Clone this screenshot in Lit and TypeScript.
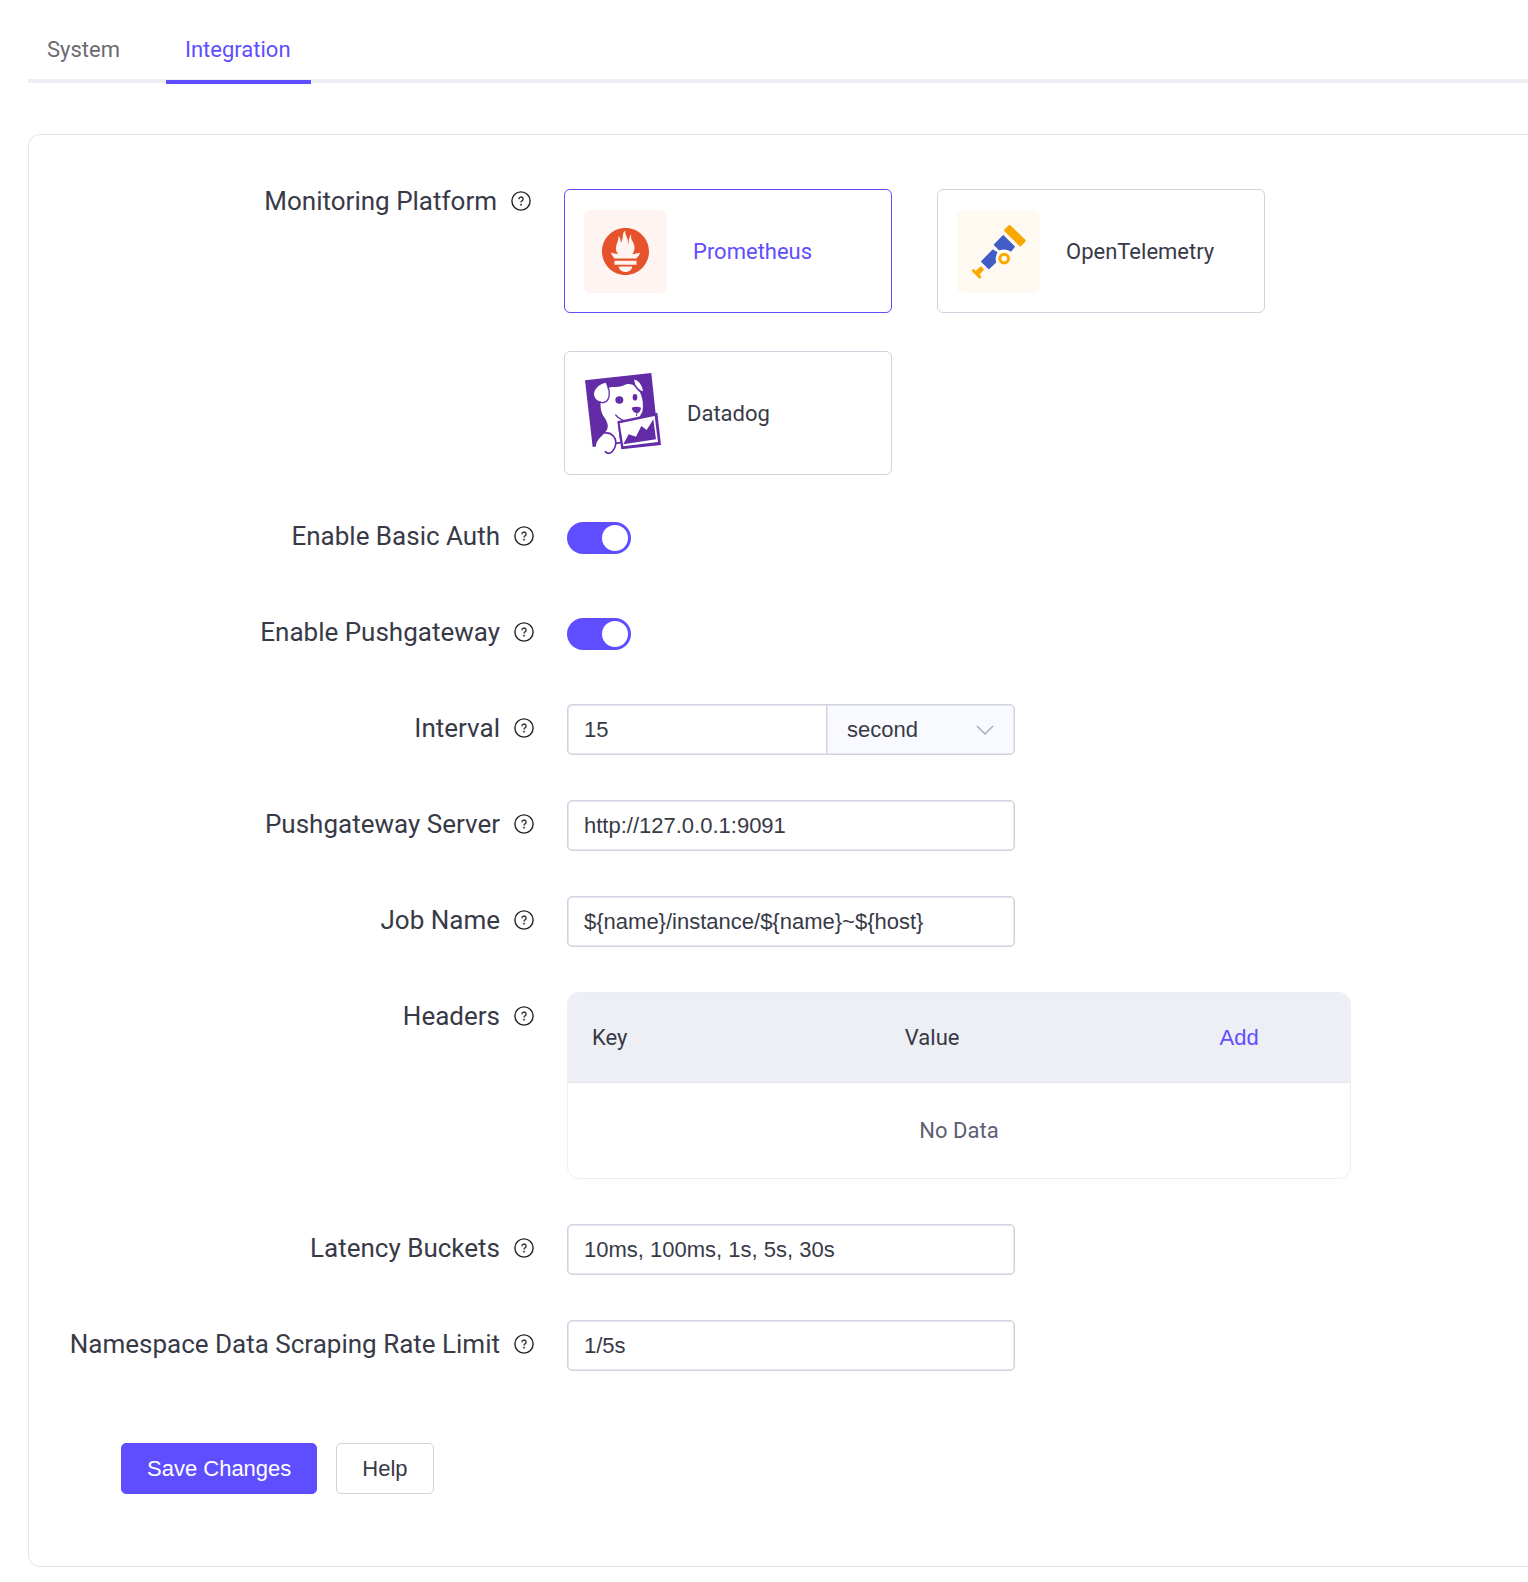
import { LitElement, html, css, TemplateResult } from "lit";
import { customElement, state } from "lit/decorators.js";
import { classMap } from "lit/directives/class-map.js";

const prometheusLogo = html`
  <span class="tile tile-red">
    <svg width="47" height="47" viewBox="0 0 24 24" aria-hidden="true">
      <path
        fill="#e6522c"
        d="M12 0C5.373 0 0 5.372 0 12c0 6.627 5.373 12 12 12s12-5.373 12-12c0-6.628-5.373-12-12-12zm0 22.46c-1.885 0-3.414-1.26-3.414-2.814h6.828c0 1.553-1.528 2.813-3.414 2.813zm5.64-3.745H6.36v-2.046h11.28v2.046zm-.04-3.098H6.391c-.037-.043-.075-.086-.111-.13-1.155-1.401-1.427-2.133-1.69-2.879-.005-.025 1.4.287 2.395.511 0 0 .513.119 1.262.255-.72-.843-1.147-1.915-1.147-3.01 0-2.406 1.845-4.508 1.18-6.207.648.053 1.34 1.367 1.387 3.422.689-.951.977-2.69.977-3.755 0-1.103.727-2.385 1.454-2.429-.648 1.069.168 1.984.893 4.256.272.854.237 2.29.447 3.201.07-1.892.395-4.652 1.595-5.605-.529 1.2.079 2.702.494 3.424.671 1.164 1.078 2.047 1.078 3.716a4.642 4.642 0 01-1.11 2.996c.792-.149 1.34-.283 1.34-.283l2.573-.502s-.374 1.538-1.81 3.019z"
      />
    </svg>
  </span>
`;

const openTelemetryLogo = html`
  <span class="tile tile-amber">
    <svg width="83" height="83" viewBox="0 0 248 248" aria-hidden="true">
      <g fill="#f8a800" stroke="#f8a800" stroke-linejoin="round">
        <path stroke-width="10" d="M157 50 146 61 189 103 200 92Z" />
        <path stroke-width="6" d="M71 172 77 178 66 190 59 183Z" />
        <path fill="none" stroke-width="9" stroke-linecap="round" d="M49 181 68 200" />
        <circle cx="141" cy="145" r="13" fill="none" stroke-width="9" />
      </g>
      <g fill="#425cc7" stroke="#425cc7" stroke-width="4" stroke-linejoin="round">
        <path d="M138 77 171 110 161 122C152 116 138 115 126 118L112 104Z" />
        <path d="M107 120 74 154 95 175 115 156C112 146 114 136 119 127Z" />
      </g>
    </svg>
  </span>
`;

const datadogLogo = html`
  <svg class="dog" width="77" height="83" viewBox="72 48 231 249" aria-hidden="true">
    <path fill="#632ca6" d="M75 73 274 51 294 240 98 273Z" />
    <path
      fill="#fff"
      d="M146 95C160 92 178 95 192 88 202 82 214 83 224 90 236 99 244 112 247 130 250 146 250 166 243 179 238 188 224 194 210 193 200 196 186 200 174 199L178 240 184 282 150 296C130 298 108 288 108 268 110 250 128 240 138 226 148 212 142 200 136 188 126 176 120 160 122 138Z"
    />
    <path fill="#fff" d="M138 80C122 82 104 96 102 112 101 126 114 139 128 136 142 133 146 118 144 104 143 94 141 86 138 80Z" />
    <path fill="none" stroke="#632ca6" stroke-width="4" d="M139 79C148 94 151 118 144 130 139 139 128 142 118 138" />
    <path fill="#fff" d="M222 71C236 72 247 88 249 106 240 104 232 96 226 86Z" />
    <path fill="none" stroke="#632ca6" stroke-width="4" d="M215 74C222 84 226 96 240 106" />
    <ellipse cx="178" cy="132" rx="12" ry="11" fill="#632ca6" />
    <ellipse cx="225" cy="124" rx="7" ry="10" fill="#632ca6" />
    <path fill="#632ca6" d="M215 155C224 151 235 151 243 155 242 165 237 171 231 172 223 170 216 164 215 155Z" />
    <path fill="none" stroke="#632ca6" stroke-width="4" d="M166 176C176 190 196 199 216 196 234 193 243 182 246 172" />
    <path fill="none" stroke="#632ca6" stroke-width="3" d="M231 172 229 180" />
    <path
      fill="none"
      stroke="#632ca6"
      stroke-width="5"
      stroke-linecap="round"
      d="M134 231C156 228 170 246 167 266 164 282 154 292 146 292 142 292 138 289 136 287M167 262 182 260"
    />
    <path fill="#632ca6" d="M172 196 292 170 303 267 184 280Z" />
    <path fill="#fff" d="M179 202 284 180 294 258 190 271Z" />
    <path fill="#632ca6" d="M190 265 206 235 228 242 244 210 260 222 280 190 288 250Z" />
  </svg>
`;

interface Platform {
  id: string;
  name: string;
  logo: TemplateResult;
}

const platforms: Platform[] = [
  { id: "prometheus", name: "Prometheus", logo: prometheusLogo },
  { id: "opentelemetry", name: "OpenTelemetry", logo: openTelemetryLogo },
  { id: "datadog", name: "Datadog", logo: datadogLogo },
];

@customElement("help-icon")
class HelpIcon extends LitElement {
  static styles = css`
    :host {
      display: block;
      flex: none;
      width: 20px;
      height: 20px;
    }
    svg {
      display: block;
    }
  `;

  render() {
    return html`
      <svg width="20" height="20" viewBox="0 0 20 20" fill="none" stroke="#222327" aria-hidden="true">
        <circle cx="10" cy="10" r="9.1" stroke-width="1.4" />
        <path stroke-width="1.3" d="M7.9 8.2A2.1 2 0 1 1 11 9.8C10.3 10.2 10 10.5 10 11.6" />
        <circle cx="10" cy="13.7" r="0.9" fill="#222327" stroke="none" />
      </svg>
    `;
  }
}

@customElement("app-root")
class AppRoot extends LitElement {
  static styles = css`
    :host {
      --brand: #5e4eff;
      --ink: #383a47;
      --line: #d0d3df;
      --soft: #e4e6ee;
      --fill: #eeeff5;
      display: block;
      padding: 18px 0 15px 28px;
      background: #fff;
      color: var(--ink);
      font-family: Roboto, sans-serif;
      font-size: 22px;
      line-height: 32px;
    }
    *,
    *::before {
      box-sizing: border-box;
    }
    .tabs {
      display: flex;
      gap: 26px;
      border-bottom: 4px solid var(--fill);
    }
    .tab {
      margin-bottom: -5px;
      padding: 2px 20px 0 19px;
      border-bottom: 4px solid transparent;
      color: #6b6b6f;
      line-height: 60px;
      text-decoration: none;
    }
    .tab.active {
      border-bottom-color: var(--brand);
      color: var(--brand);
    }
    .panel {
      margin-top: 51px;
      padding: 42px 0 72px;
      border: 1px solid #e6e6ea;
      border-right: none;
      border-radius: 12px 0 0 12px;
    }
    .rows {
      display: grid;
      gap: 45px;
    }
    .row {
      display: grid;
      grid-template-columns: 538px minmax(0, 1fr);
      align-items: start;
    }
    .row.platform {
      grid-template-columns: 535px minmax(0, 1fr);
      margin-bottom: 37px;
    }
    .label {
      display: flex;
      align-items: center;
      justify-content: flex-end;
      gap: 14px;
      padding-right: 33px;
      font-size: 26px;
      line-height: 48px;
      white-space: nowrap;
    }
    .cards {
      display: flex;
      flex-wrap: wrap;
      gap: 38px 45px;
      max-width: 760px;
      padding-top: 12px;
    }
    .card {
      display: flex;
      align-items: center;
      width: 328px;
      padding: 20px 19px 19px;
      border: 1px solid var(--line);
      border-radius: 6px;
      cursor: pointer;
    }
    .card.selected {
      border-color: var(--brand);
      color: var(--brand);
    }
    .card input {
      width: 0;
      height: 0;
      margin: 0;
      appearance: none;
    }
    .card-name {
      margin-left: 26px;
    }
    .tile {
      display: grid;
      place-items: center;
      width: 83px;
      height: 83px;
      border-radius: 6px;
    }
    .tile-red {
      background: #fff4f1;
    }
    .tile-amber {
      background: #fffaf1;
    }
    .dog {
      overflow: visible;
    }
    .switch-cell {
      display: flex;
      align-items: center;
      height: 51px;
    }
    .switch {
      display: flex;
      justify-content: flex-start;
      width: 64px;
      height: 32px;
      margin: 0;
      padding: 3px;
      border-radius: 16px;
      background: #c9ccd8;
      appearance: none;
      cursor: pointer;
    }
    .switch:checked {
      justify-content: flex-end;
      background: var(--brand);
    }
    .switch::before {
      content: "";
      width: 26px;
      height: 26px;
      border-radius: 50%;
      background: #fff;
    }
    .field,
    .unit {
      width: 448px;
      height: 51px;
      margin: 0;
      padding: 0 16px;
      border: 1px solid var(--line);
      border-radius: 5px;
      box-shadow: inset 0 0 0 1px var(--soft);
      background: #fff;
      color: var(--ink);
      font-family: "Liberation Sans", Arial, sans-serif;
      font-size: 22px;
    }
    .interval {
      display: grid;
      grid-template-columns: 259px 189px;
    }
    .interval .field {
      width: auto;
      border-right: none;
      border-radius: 5px 0 0 5px;
      box-shadow:
        inset 1px 1px var(--soft),
        inset 0 -1px var(--soft);
    }
    .unit-wrap {
      display: grid;
      align-items: center;
    }
    .unit-wrap > * {
      grid-area: 1 / 1;
    }
    .unit-wrap svg {
      justify-self: end;
      margin-right: 20px;
      pointer-events: none;
    }
    .unit {
      width: auto;
      padding: 0 20px;
      border-radius: 0 5px 5px 0;
      background: #f9faff;
      appearance: none;
    }
    .table-box {
      max-width: 784px;
      border: 1px solid #ecedf6;
      border-radius: 12px;
      overflow: hidden;
    }
    table {
      width: 100%;
      border-collapse: separate;
      border-spacing: 0;
      table-layout: fixed;
    }
    th {
      height: 90px;
      padding: 1px 24px 0;
      border-bottom: 1px solid #e5e6ea;
      background: var(--fill);
      font-weight: 400;
      text-align: left;
    }
    .wide {
      width: 40%;
    }
    td {
      height: 95px;
      padding: 0;
      color: #5c6071;
      text-align: center;
    }
    button {
      margin: 0;
      border: none;
      background: none;
      font-family: "Liberation Sans", Arial, sans-serif;
      font-size: 22px;
      line-height: 32px;
      cursor: pointer;
    }
    .add {
      display: block;
      padding: 0 2px;
      color: var(--brand);
    }
    .actions {
      display: flex;
      gap: 19px;
      margin-top: 72px;
      padding-left: 92px;
    }
    .action {
      height: 51px;
      padding: 0 25px;
      border: 1px solid var(--line);
      border-radius: 5px;
      color: var(--ink);
    }
    .action.primary {
      border-color: var(--brand);
      background: var(--brand);
      color: #fff;
    }
  `;

  @state() private platform = "prometheus";

  private label(text: string, id: string) {
    return html`<label class="label" for=${id}>${text}<help-icon></help-icon></label>`;
  }

  private switchRow(text: string, id: string) {
    return html`
      <div class="row">
        ${this.label(text, id)}
        <div class="switch-cell"><input class="switch" id=${id} type="checkbox" role="switch" checked /></div>
      </div>
    `;
  }

  private textRow(text: string, id: string, value: string) {
    return html`
      <div class="row">
        ${this.label(text, id)}
        <input class="field" id=${id} type="text" .value=${value} />
      </div>
    `;
  }

  render() {
    return html`
      <nav class="tabs">
        <a class="tab" href="#system">System</a>
        <a class="tab active" href="#integration" aria-current="page">Integration</a>
      </nav>
      <form class="panel" @submit=${(e: Event) => e.preventDefault()}>
        <div class="row platform" role="radiogroup" aria-labelledby="platform-label">
          <span class="label" id="platform-label">Monitoring Platform<help-icon></help-icon></span>
          <div class="cards">
            ${platforms.map(
              (p) => html`
                <label class=${classMap({ card: true, selected: p.id === this.platform })}>
                  <input
                    type="radio"
                    name="platform"
                    value=${p.id}
                    .checked=${p.id === this.platform}
                    @change=${() => (this.platform = p.id)}
                  />
                  ${p.logo}
                  <span class="card-name">${p.name}</span>
                </label>
              `,
            )}
          </div>
        </div>
        <div class="rows">
          ${this.switchRow("Enable Basic Auth", "basic-auth")}
          ${this.switchRow("Enable Pushgateway", "pushgateway")}
          <div class="row">
            ${this.label("Interval", "interval")}
            <div class="interval">
              <input class="field" id="interval" type="text" .value=${"15"} />
              <div class="unit-wrap">
                <select class="unit" aria-label="Interval unit">
                  <option>second</option>
                  <option>minute</option>
                  <option>hour</option>
                </select>
                <svg width="20" height="12" viewBox="0 0 20 12" fill="none" aria-hidden="true">
                  <path d="M2 2 10 10 18 2" stroke="#a6a9b3" stroke-width="1.4" />
                </svg>
              </div>
            </div>
          </div>
          ${this.textRow("Pushgateway Server", "server", "http://127.0.0.1:9091")}
          ${this.textRow("Job Name", "job", "${name}/instance/${name}~${host}")}
          <div class="row">
            <span class="label" id="headers-label">Headers<help-icon></help-icon></span>
            <div class="table-box">
              <table aria-labelledby="headers-label">
                <thead>
                  <tr>
                    <th class="wide">Key</th>
                    <th class="wide">Value</th>
                    <th><button class="add" type="button">Add</button></th>
                  </tr>
                </thead>
                <tbody>
                  <tr>
                    <td colspan="3">No Data</td>
                  </tr>
                </tbody>
              </table>
            </div>
          </div>
          ${this.textRow("Latency Buckets", "latency", "10ms, 100ms, 1s, 5s, 30s")}
          ${this.textRow("Namespace Data Scraping Rate Limit", "rate", "1/5s")}
        </div>
        <div class="actions">
          <button class="action primary" type="submit">Save Changes</button>
          <button class="action" type="button">Help</button>
        </div>
      </form>
    `;
  }
}
